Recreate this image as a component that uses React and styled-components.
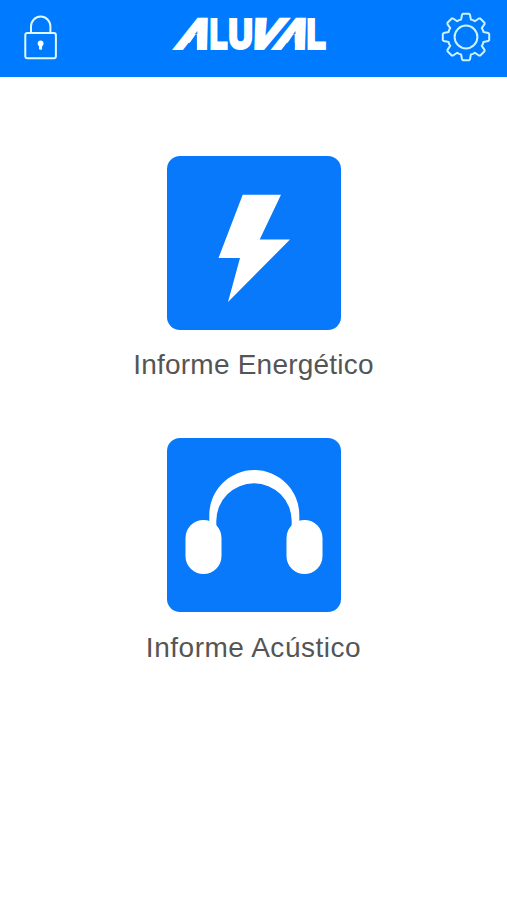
import React from "react";
import styled, { createGlobalStyle } from "styled-components";

const reports = [
    { id: "energy", title: "Informe Energético", Icon: BoltIcon, spacing: 0.22 },
    { id: "acoustic", title: "Informe Acústico", Icon: HeadphonesIcon, spacing: 0.52 },
];

export default function App() {
    return (
        <>
            <GlobalStyle />
            <Screen>
                <Header>
                    <IconButton aria-label="Bloquear">
                        <LockIcon />
                    </IconButton>
                    <Logo />
                    <IconButton aria-label="Ajustes">
                        <GearIcon />
                    </IconButton>
                </Header>
                <ReportList>
                    {reports.map(({ id, title, Icon, spacing }) => (
                        <Report key={id}>
                            <Tile>
                                <Icon />
                            </Tile>
                            <Label $spacing={spacing}>{title}</Label>
                        </Report>
                    ))}
                </ReportList>
            </Screen>
        </>
    );
}

function LockIcon() {
    return (
        <svg width="34" height="46" viewBox="24 14 34 46" fill="none">
            <g stroke="#dff8ff" strokeWidth="2">
                <rect x="25.3" y="33" width="30.6" height="25.2" rx="2" />
                <path d="M31 33V26.3a9.7 9.7 0 0 1 19.4 0V33" />
            </g>
            <circle cx="40.6" cy="43.4" r="2.9" fill="#fff" />
            <path d="M39.6 44h2v5.2h-2z" fill="#fff" stroke="#fff" />
        </svg>
    );
}

// one tooth plus the valley after it, repeated every 45 degrees
const tooth = [
    [-4.9, -17.4],
    [-4, -22.2],
    [-3, -23.2],
    [3, -23.2],
    [4, -22.2],
    [4.9, -17.4],
    [7, -16.9],
];

const gearPoints = Array.from({ length: 8 })
    .flatMap((_, i) => {
        const a = (i * Math.PI) / 4;
        return tooth.map(([x, y]) =>
            [
                (x * Math.cos(a) - y * Math.sin(a)).toFixed(2),
                (x * Math.sin(a) + y * Math.cos(a)).toFixed(2),
            ].join(",")
        );
    })
    .join(" ");

function GearIcon() {
    return (
        <svg
            width="50"
            height="50"
            viewBox="-25 -25 50 50"
            fill="none"
            stroke="#c9f4ff"
            strokeWidth="2"
            strokeLinejoin="round"
        >
            <polygon points={gearPoints} />
            <circle r="11.4" />
        </svg>
    );
}

function Logo() {
    return (
        <Wordmark width="180" height="64" viewBox="163.5 5 180 64">
            <text transform="translate(174.3 47.5) skewX(-22.2) scale(1.05 1)">A</text>
            <text transform="translate(272.7 47.5) skewX(-22.2) scale(1.03 1)">A</text>
            {/* the open foot of each A */}
            <g fill="#007aff" stroke="none">
                <path d="M195 34.5h1.4V50h-12z" />
                <path d="M292.8 34.5h1.4V50h-12z" />
            </g>
            <text transform="translate(209.5 47.5) scale(0.68 1)">L</text>
            <text transform="translate(228.3 47.5) scale(0.8 1)">U</text>
            <text transform="translate(244.6 47.5) skewX(-23.6) scale(1.09 1)">V</text>
            <text transform="translate(306.4 47.5) scale(0.73 1)">L</text>
        </Wordmark>
    );
}

function BoltIcon() {
    return (
        <svg width="174" height="174" viewBox="0 0 174 174">
            <path d="M75.7 38.7H114L92.7 83.5H123L61 146 73 102H51.5z" fill="#fff" />
        </svg>
    );
}

function HeadphonesIcon() {
    return (
        <svg width="174" height="174" viewBox="0 0 174 174" fill="#fff">
            <path d="M42.3 90V77a45 45 0 0 1 90 0V90H124.7V83a37.7 37.7 0 0 0-75.4 0V90z" />
            <rect x="18.5" y="82" width="36" height="54" rx="18" />
            <rect x="119.5" y="82" width="36" height="54" rx="18" />
        </svg>
    );
}

const GlobalStyle = createGlobalStyle`
    * {
        box-sizing: border-box;
    }
    body {
        margin: 0;
        background-color: #fff;
        font-family: "Liberation Sans", Arial, sans-serif;
    }
`;

const Screen = styled.div`
    min-height: 100vh;
    background-color: #fff;
`;

const Header = styled.header`
    display: flex;
    justify-content: space-between;
    align-items: center;
    height: 76.5px;
    padding: 0 16px 2px 16px;
    background-color: #007aff;
`;

const IconButton = styled.button`
    display: flex;
    justify-content: center;
    align-items: center;
    width: 50px;
    height: 50px;
    padding: 0;
    border: none;
    background: none;
`;

const Wordmark = styled.svg`
    overflow: visible;
    font-family: "Liberation Sans", Arial, sans-serif;
    font-size: 41px;
    font-weight: 700;
    fill: #fff;
    stroke: #fff;
    stroke-width: 4;
`;

const ReportList = styled.main`
    display: flex;
    flex-direction: column;
    align-items: center;
    gap: 55.2px;
    padding: 79.5px 0 0 1px;
`;

const Report = styled.section`
    display: flex;
    flex-direction: column;
    align-items: center;
    width: 260px;
    gap: 17.2px;
`;

const Tile = styled.div`
    width: 174px;
    height: 174px;
    border-radius: 13px;
    overflow: hidden;
    background-color: #0879fb;
    svg {
        display: block;
    }
`;

const Label = styled.span`
    height: 36px;
    font-size: 28px;
    line-height: 36px;
    letter-spacing: ${(props) => props.$spacing}px;
    margin-left: -1px;
    color: #555;
`;
